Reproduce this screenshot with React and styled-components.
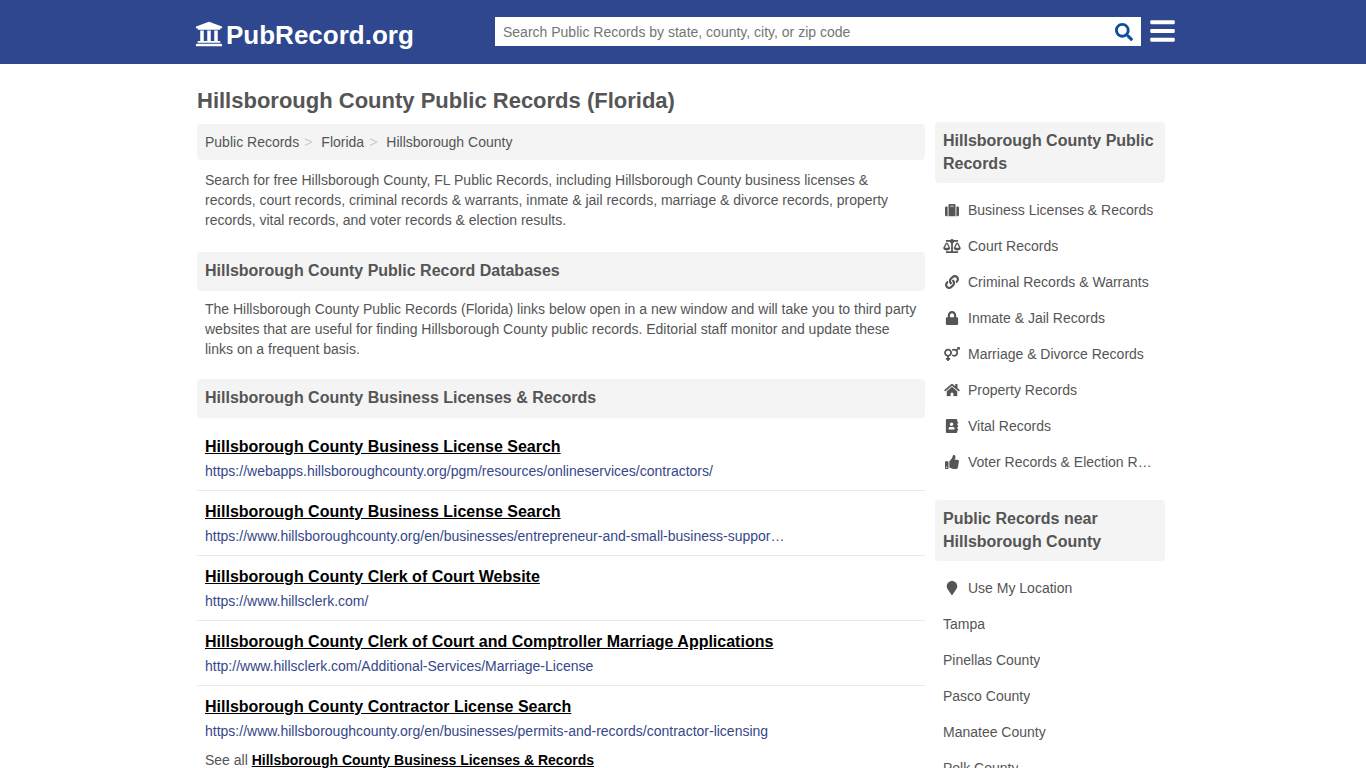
import React, { useState } from 'react';
import styled, { createGlobalStyle } from 'styled-components';
import {
  FaUniversity,
  FaSearch,
  FaBars,
  FaSuitcase,
  FaBalanceScale,
  FaLink,
  FaLock,
  FaVenusMars,
  FaHome,
  FaAddressBook,
  FaThumbsUp,
  FaMapMarker,
} from 'react-icons/fa';

const colors = {
  blue: '#2e478f',
  linkBlue: '#36478a',
  searchBlue: '#0b509e',
  text: '#555',
  panel: '#f4f4f4',
  line: '#eaeaea',
};

const GlobalStyle = createGlobalStyle`
  * {
    box-sizing: border-box;
  }
  body {
    margin: 0;
    background: white;
    color: ${colors.text};
    font-family: 'Liberation Sans', Arial, Helvetica, sans-serif;
    font-size: 14px;
    line-height: 20px;
  }
  h1, h2, h3, p, ul, ol {
    margin: 0;
    padding: 0;
  }
  ul, ol {
    list-style: none;
  }
`;

const Header = styled.header`
  background: ${colors.blue};
`;

const HeaderInner = styled.div`
  display: flex;
  align-items: flex-start;
  max-width: 984px;
  min-height: 64px;
  margin: 0 auto;
  padding: 17px 0 0 4px;
`;

const Logo = styled.a`
  display: flex;
  align-items: flex-start;
  flex: 0 0 300px;
  gap: 3px;
  height: 36px;
  color: white;
  font-size: 26px;
  font-weight: bold;
  line-height: 36px;
  text-decoration: none;
  svg {
    width: 28px;
    height: 28px;
    margin-top: 3px;
  }
`;

const SearchForm = styled.form`
  display: flex;
  flex: 1;
  height: 29px;
  background: white;
`;

const SearchInput = styled.input`
  flex: 1;
  min-width: 0;
  padding: 0 8px;
  border: none;
  outline: none;
  background: transparent;
  font: inherit;
  &::placeholder {
    color: #757575;
  }
`;

const SearchButton = styled.button`
  display: flex;
  align-items: center;
  padding: 0 8px;
  border: none;
  background: transparent;
  color: ${colors.searchBlue};
  font-size: 18px;
`;

const MenuButton = styled.button`
  display: flex;
  margin-left: 9px;
  padding: 0;
  border: none;
  background: transparent;
  color: white;
  font-size: 28px;
  svg {
    width: 25px;
    height: 28px;
  }
`;

const Page = styled.div`
  max-width: 980px;
  margin: 0 auto;
  padding: 22px 8px 20px 4px;
`;

const PageTitle = styled.h1`
  font-size: 22px;
  line-height: 30px;
`;

const Columns = styled.div`
  display: grid;
  grid-template-columns: minmax(0, 1fr) 230px;
  gap: 10px;
  margin-top: 6px;
`;

const Breadcrumbs = styled.ol`
  display: flex;
  margin-top: 2px;
  padding: 8px;
  border-radius: 4px;
  background: ${colors.panel};
  li + li::before {
    content: '>';
    padding: 0 9px 0 5px;
    color: #ccc;
  }
  a {
    color: inherit;
    text-decoration: none;
  }
`;

const Intro = styled.p`
  padding: ${(props) => (props.$first ? '10px' : '8px')} 8px 0;
`;

const SectionTitle = styled.h2`
  margin-top: ${(props) => props.$top}px;
  padding: 7px 8px 9px;
  border-radius: 4px;
  background: ${colors.panel};
  font-size: 16px;
  line-height: 23px;
`;

const ResultList = styled.ul`
  padding-top: 8px;
`;

const Result = styled.li`
  padding: 8px 8px 7px;
  & + & {
    border-top: 1px solid ${colors.line};
  }
`;

const ResultLink = styled.a`
  display: block;
  color: black;
  font-size: 16px;
  font-weight: bold;
  line-height: 25px;
`;

const ResultUrl = styled.p`
  max-width: 582px;
  overflow: hidden;
  color: ${colors.linkBlue};
  line-height: 24px;
  text-overflow: ellipsis;
  white-space: nowrap;
`;

const SeeAll = styled.p`
  padding: 0 8px;
  a {
    color: black;
    font-weight: bold;
  }
`;

const SideTitle = styled.h3`
  padding: 7px 8px 8px;
  border-radius: 4px;
  background: ${colors.panel};
  font-size: 16px;
  line-height: 23px;
`;

const SideList = styled.ul`
  padding: 9px 0 20px;
`;

const SideLink = styled.a`
  display: flex;
  align-items: center;
  gap: 7px;
  height: 36px;
  padding: 0 8px;
  color: inherit;
  text-decoration: none;
  svg {
    flex: 0 0 18px;
    height: 14px;
  }
  span {
    overflow: hidden;
    text-overflow: ellipsis;
    white-space: nowrap;
  }
`;

const categories = [
  { label: 'Business Licenses & Records', Icon: FaSuitcase },
  { label: 'Court Records', Icon: FaBalanceScale },
  { label: 'Criminal Records & Warrants', Icon: FaLink },
  { label: 'Inmate & Jail Records', Icon: FaLock },
  { label: 'Marriage & Divorce Records', Icon: FaVenusMars },
  { label: 'Property Records', Icon: FaHome },
  { label: 'Vital Records', Icon: FaAddressBook },
  { label: 'Voter Records & Election Results', Icon: FaThumbsUp },
];

const nearby = [
  { label: 'Use My Location', Icon: FaMapMarker },
  { label: 'Tampa' },
  { label: 'Pinellas County' },
  { label: 'Pasco County' },
  { label: 'Manatee County' },
  { label: 'Polk County' },
];

const results = [
  {
    title: 'Hillsborough County Business License Search',
    url: 'https://webapps.hillsboroughcounty.org/pgm/resources/onlineservices/contractors/',
  },
  {
    title: 'Hillsborough County Business License Search',
    url: 'https://www.hillsboroughcounty.org/en/businesses/entrepreneur-and-small-business-support-services',
  },
  {
    title: 'Hillsborough County Clerk of Court Website',
    url: 'https://www.hillsclerk.com/',
  },
  {
    title: 'Hillsborough County Clerk of Court and Comptroller Marriage Applications',
    url: 'http://www.hillsclerk.com/Additional-Services/Marriage-License',
  },
  {
    title: 'Hillsborough County Contractor License Search',
    url: 'https://www.hillsboroughcounty.org/en/businesses/permits-and-records/contractor-licensing',
  },
];

const SideSection = ({ title, items }) => (
  <section>
    <SideTitle>{title}</SideTitle>
    <SideList>
      {items.map(({ label, Icon }) => (
        <li key={label}>
          <SideLink href="#">
            {Icon && <Icon />}
            <span>{label}</span>
          </SideLink>
        </li>
      ))}
    </SideList>
  </section>
);

const Search = () => {
  const [query, setQuery] = useState('');

  return (
    <SearchForm role="search" onSubmit={(e) => e.preventDefault()}>
      <SearchInput
        type="text"
        aria-label="Search Public Records"
        placeholder="Search Public Records by state, county, city, or zip code"
        value={query}
        onChange={(e) => setQuery(e.target.value)}
      />
      <SearchButton type="submit" aria-label="Search">
        <FaSearch />
      </SearchButton>
    </SearchForm>
  );
};

const App = () => (
  <>
    <GlobalStyle />
    <Header>
      <HeaderInner>
        <Logo href="#">
          <FaUniversity />
          PubRecord.org
        </Logo>
        <Search />
        <MenuButton type="button" aria-label="Menu">
          <FaBars />
        </MenuButton>
      </HeaderInner>
    </Header>
    <Page>
      <PageTitle>Hillsborough County Public Records (Florida)</PageTitle>
      <Columns>
        <main>
          <Breadcrumbs>
            <li>
              <a href="#">Public Records</a>
            </li>
            <li>
              <a href="#">Florida</a>
            </li>
            <li>
              <a href="#">Hillsborough County</a>
            </li>
          </Breadcrumbs>
          <Intro $first>
            Search for free Hillsborough County, FL Public Records, including Hillsborough County
            business licenses & records, court records, criminal records & warrants, inmate & jail
            records, marriage & divorce records, property records, vital records, and voter records
            & election results.
          </Intro>
          <SectionTitle $top={22}>Hillsborough County Public Record Databases</SectionTitle>
          <Intro>
            The Hillsborough County Public Records (Florida) links below open in a new window and
            will take you to third party websites that are useful for finding Hillsborough County
            public records. Editorial staff monitor and update these links on a frequent basis.
          </Intro>
          <SectionTitle $top={20}>Hillsborough County Business Licenses & Records</SectionTitle>
          <ResultList>
            {results.map(({ title, url }, i) => (
              <Result key={`result${i}`}>
                <ResultLink href={url}>{title}</ResultLink>
                <ResultUrl>{url}</ResultUrl>
              </Result>
            ))}
          </ResultList>
          <SeeAll>
            See all <a href="#">Hillsborough County Business Licenses & Records</a>
          </SeeAll>
        </main>
        <aside>
          <SideSection title="Hillsborough County Public Records" items={categories} />
          <SideSection title="Public Records near Hillsborough County" items={nearby} />
        </aside>
      </Columns>
    </Page>
  </>
);

export default App;
